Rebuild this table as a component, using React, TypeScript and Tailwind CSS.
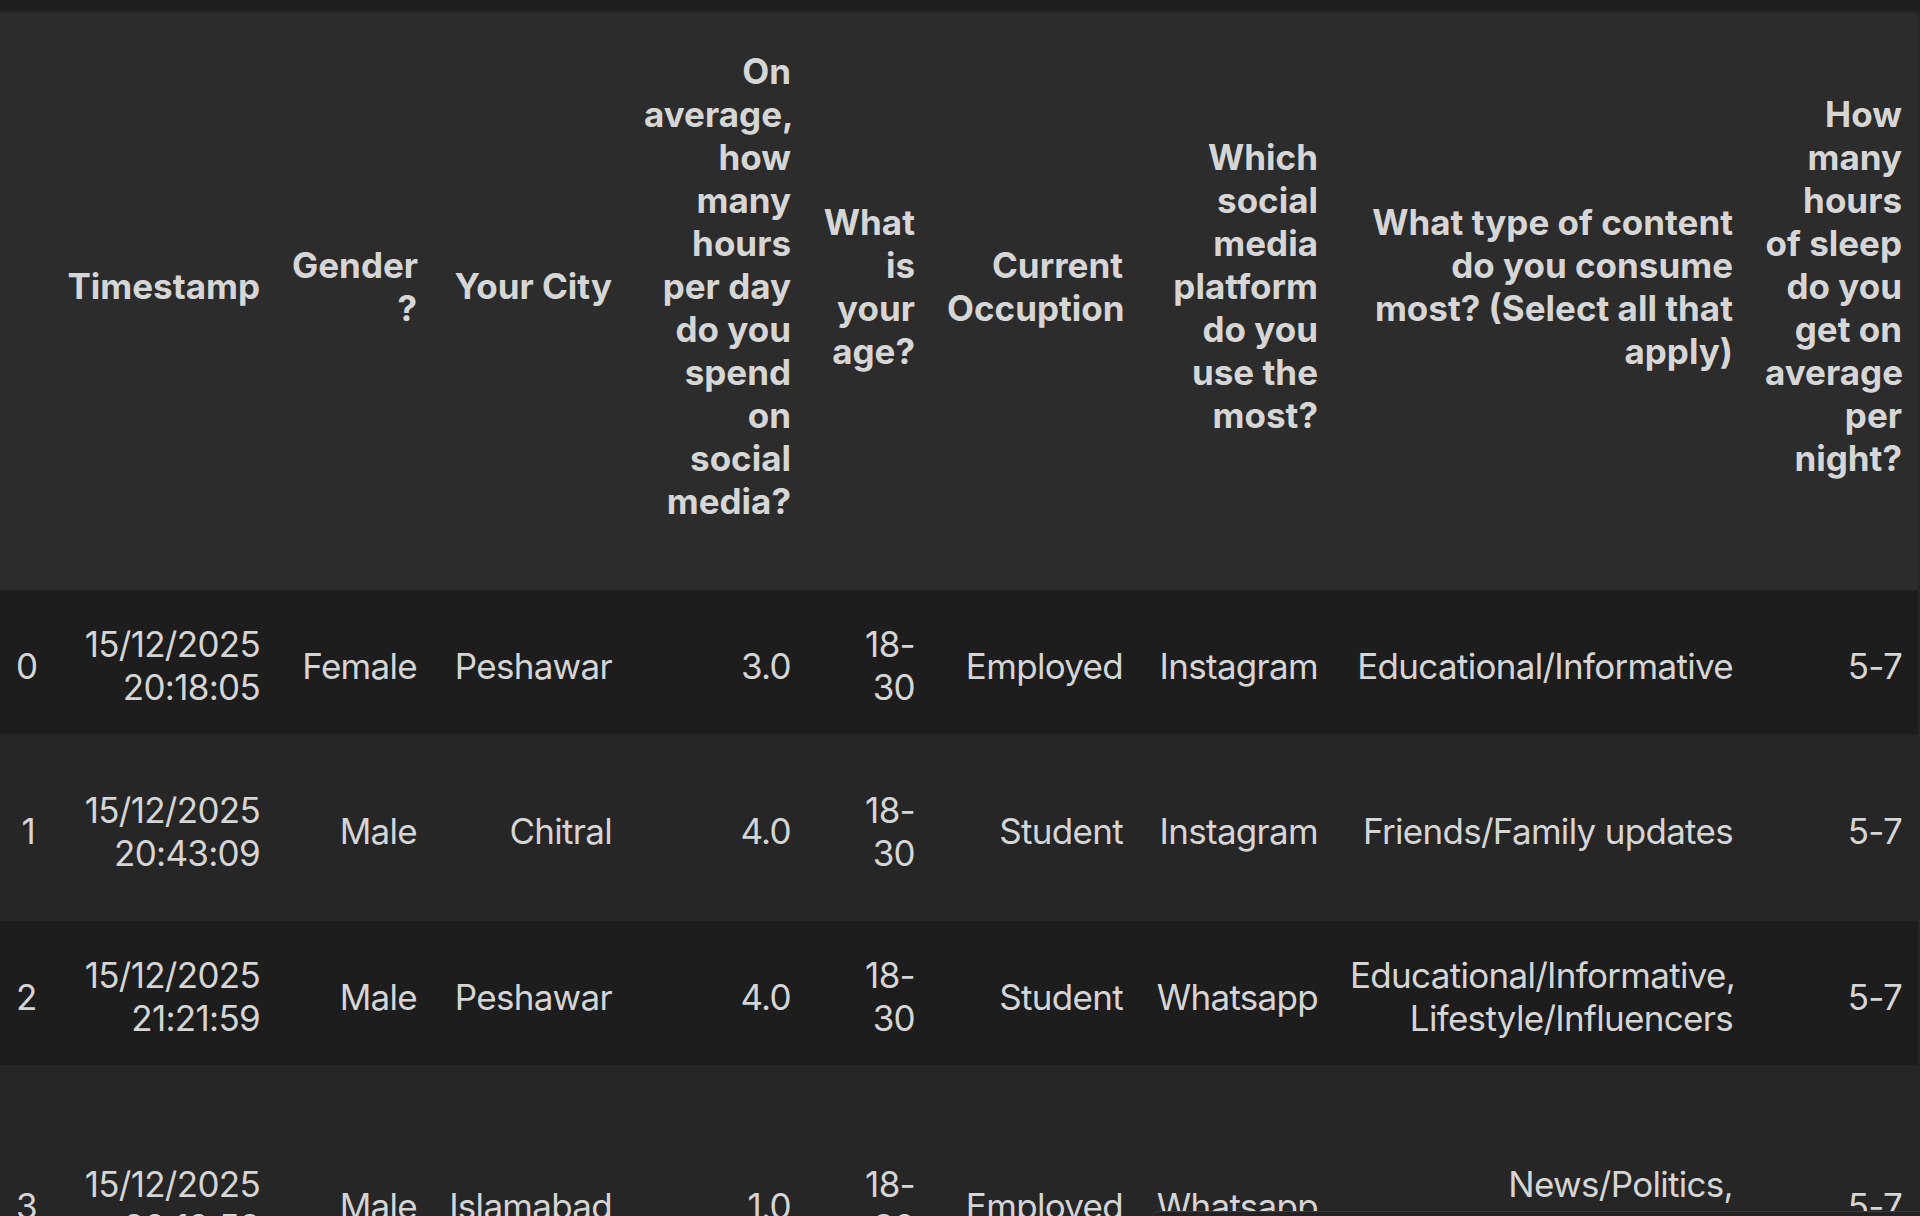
import React from "react";

// column widths measured off the notebook output
const colWidths = [
  "w-[51px]",
  "w-[225px]",
  "w-[157px]",
  "w-[195px]",
  "w-[179px]",
  "w-[124px]",
  "w-[208px]",
  "w-[195px]",
  "w-[415px]",
  "w-[169px]",
];

const headers: string[][] = [
  [],
  ["Timestamp"],
  ["Gender", "?"],
  ["Your City"],
  [
    "On",
    "average,",
    "how",
    "many",
    "hours",
    "per day",
    "do you",
    "spend",
    "on",
    "social",
    "media?",
  ],
  ["What", "is", "your", "age?"],
  ["Current", "Occuption"],
  ["Which", "social", "media", "platform", "do you", "use the", "most?"],
  ["What type of content", "do you consume", "most? (Select all that", "apply)"],
  ["How", "many", "hours", "of sleep", "do you", "get on", "average", "per", "night?"],
];

interface Row {
  height: string;
  bg: string;
  cells: string[][];
}

const rows: Row[] = [
  {
    height: "h-[144px]",
    bg: "bg-[#1d1d1d]",
    cells: [
      ["0"],
      ["15/12/2025", "20:18:05"],
      ["Female"],
      ["Peshawar"],
      ["3.0"],
      ["18-", "30"],
      ["Employed"],
      ["Instagram"],
      ["Educational/Informative"],
      ["5-7"],
    ],
  },
  {
    height: "h-[187px]",
    bg: "bg-[#262626]",
    cells: [
      ["1"],
      ["15/12/2025", "20:43:09"],
      ["Male"],
      ["Chitral"],
      ["4.0"],
      ["18-", "30"],
      ["Student"],
      ["Instagram"],
      ["Friends/Family updates"],
      ["5-7"],
    ],
  },
  {
    height: "h-[144px]",
    bg: "bg-[#1d1d1d]",
    cells: [
      ["2"],
      ["15/12/2025", "21:21:59"],
      ["Male"],
      ["Peshawar"],
      ["4.0"],
      ["18-", "30"],
      ["Student"],
      ["Whatsapp"],
      ["Educational/Informative,", "Lifestyle/Influencers"],
      ["5-7"],
    ],
  },
  {
    height: "h-[274px]",
    bg: "bg-[#262626]",
    cells: [
      ["3"],
      ["15/12/2025", "20:19:58"],
      ["Male"],
      ["Islamabad"],
      ["1.0"],
      ["18-", "30"],
      ["Employed"],
      ["Whatsapp"],
      ["News/Politics,", "Entertainment/Memes"],
      ["5-7"],
    ],
  },
];

const Lines: React.FC<{ lines: string[] }> = ({ lines }) => (
  <>
    {lines.map((line, i) => (
      <div key={i} className="whitespace-nowrap">
        {line}
      </div>
    ))}
  </>
);

const App: React.FC = () => {
  return (
    <div className="relative w-[1920px] h-[1216px] overflow-hidden bg-[#262626] font-['Inter','Liberation_Sans',sans-serif] antialiased">
      {/* toolbar strip above the output */}
      <div className="h-[13px] bg-[#1f1f1f] border-b-2 border-[#252525]" />

      <table className="table-fixed border-collapse w-[1918px] text-[35px] leading-[43px] text-[#d5d5d5]">
        <colgroup>
          {colWidths.map((w, i) => (
            <col key={i} className={w} />
          ))}
        </colgroup>

        <thead className="bg-[#2c2c2c]">
          <tr className="h-[577px]">
            {headers.map((lines, i) => (
              <th
                key={i}
                className="px-4 pt-0 pb-[30px] text-right align-middle font-bold text-[#d6d6d6]"
              >
                <Lines lines={lines} />
              </th>
            ))}
          </tr>
        </thead>

        <tbody>
          {rows.map((row, r) => (
            <tr key={r} className={`${row.height} ${row.bg}`}>
              {row.cells.map((lines, c) => (
                <td
                  key={c}
                  className="px-4 pt-[8px] pb-0 text-right align-middle tracking-[-0.02em]"
                >
                  <Lines lines={lines} />
                </td>
              ))}
            </tr>
          ))}
        </tbody>
      </table>

      {/* edge of the panel sliding in at the bottom */}
      <div className="absolute left-[1153px] top-[1211px] right-0 bottom-0 bg-[#232323] border-t border-l border-[#3a3a3a] rounded-tl-md" />
    </div>
  );
};

export default App;
